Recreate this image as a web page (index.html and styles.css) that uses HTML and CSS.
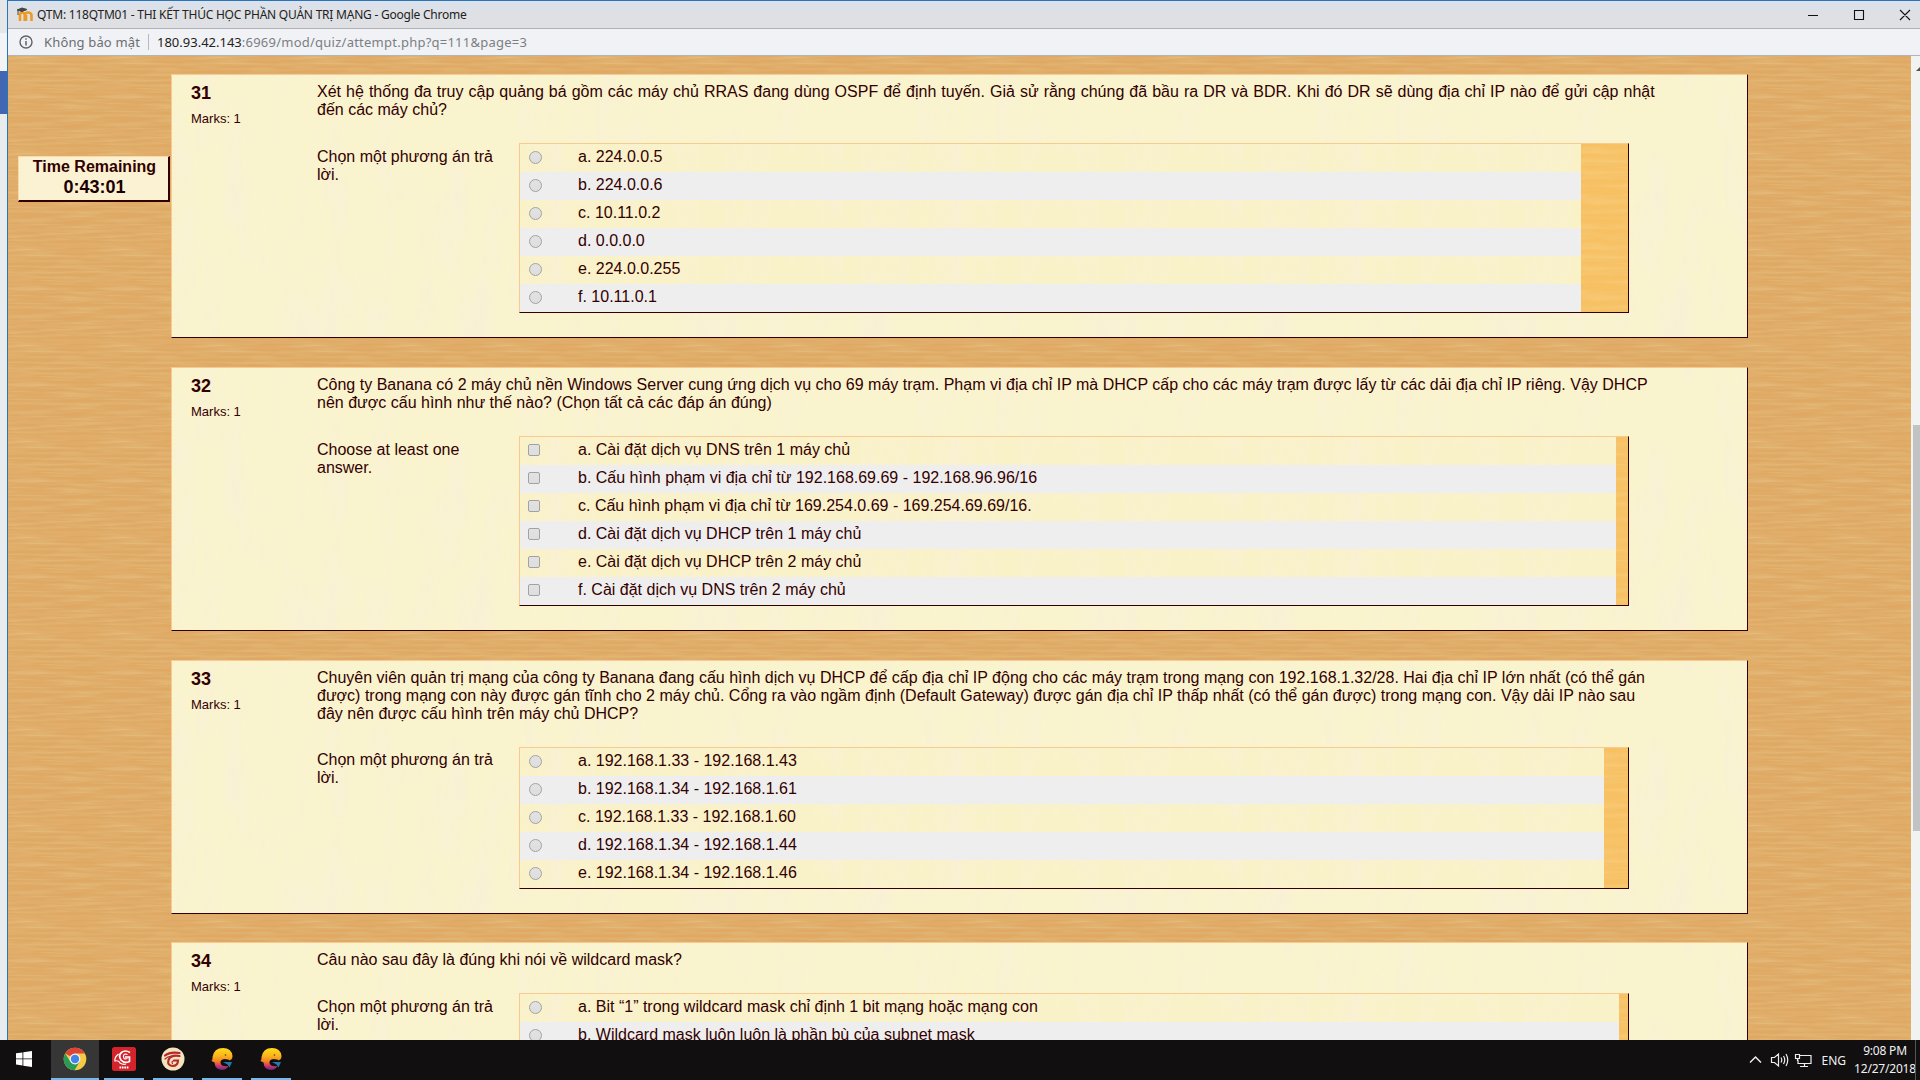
FILE: index.html
```html
<!DOCTYPE html>
<html lang="vi">
<head>
<meta charset="utf-8">
<title>QTM: 118QTM01 - THI KẾT THÚC HỌC PHẦN QUẢN TRỊ MẠNG</title>
<link rel="stylesheet" href="styles.css">
</head>
<body>
<div class="desktop">
  <div class="behind"><i></i></div>
  <div class="window">
    <header class="titlebar">
      <svg class="favicon" width="17" height="15" viewBox="0 0 17 15"><path d="M3 14V8q0-2.500 2.300-2.500T7.700 8v6M8 8q0-2.500 3-2.500T14.500 8v6M9 14V8" fill="none" stroke="#eb9a25" stroke-width="2.600"/><path d="M0 3l5-2 5 1.500-5 2zM1 4v4" fill="#444" stroke="#444"/></svg>
      <span class="title">QTM: 118QTM01 - THI KẾT THÚC HỌC PHẦN QUẢN TRỊ MẠNG - Google Chrome</span>
      <svg class="controls" width="110" height="14" viewBox="0 0 110 14"><path d="M3 7.500h10M49.500 2.500h9v9h-9zM95 2l10 10M105 2l-10 10" fill="none" stroke="#111" stroke-width="1.100"/></svg>
    </header>
    <div class="addressbar">
      <svg width="14" height="14" viewBox="0 0 14 14"><circle cx="7" cy="7" r="6" fill="none" stroke="#5f6368" stroke-width="1.400"/><path d="M7 6v4.500M7 3.300v1.500" stroke="#5f6368" stroke-width="1.500"/></svg>
      <span class="insecure">Không bảo mật</span><span class="divider"></span><span class="url"><b>180.93.42.143</b>:6969/mod/quiz/attempt.php?q=111&amp;page=3</span>
    </div>
    <div class="viewport">
      <main class="page">
        <section class="card">
          <div class="info"><h2>31</h2><p>Marks: 1</p></div>
          <div class="content">
            <p class="question"><span class="justified">Xét hệ thống đa truy cập quảng bá gồm các máy chủ RRAS đang dùng OSPF để định tuyến. Giả sử rằng chúng đã bầu ra DR và BDR. Khi đó DR sẽ dùng địa chỉ IP nào để gửi cập nhật</span><br>đến các máy chủ?</p>
            <div class="ablock"><p class="prompt">Chọn một phương án trả lời.</p>
              <ul class="answers pad47">
                <li><i class="radio"></i>a. 224.0.0.5</li><li><i class="radio"></i>b. 224.0.0.6</li><li><i class="radio"></i>c. 10.11.0.2</li><li><i class="radio"></i>d. 0.0.0.0</li><li><i class="radio"></i>e. 224.0.0.255</li><li><i class="radio"></i>f. 10.11.0.1</li>
              </ul></div>
          </div>
        </section>
        <section class="card">
          <div class="info"><h2>32</h2><p>Marks: 1</p></div>
          <div class="content">
            <p class="question">Công ty Banana có 2 máy chủ nền Windows Server cung ứng dịch vụ cho 69 máy trạm. Phạm vi địa chỉ IP mà DHCP cấp cho các máy trạm được lấy từ các dải địa chỉ IP riêng. Vậy DHCP<br>nên được cấu hình như thế nào? (Chọn tất cả các đáp án đúng)</p>
            <div class="ablock"><p class="prompt">Choose at least one answer.</p>
              <ul class="answers pad12">
                <li><i class="check"></i>a. Cài đặt dịch vụ DNS trên 1 máy chủ</li><li><i class="check"></i>b. Cấu hình phạm vi địa chỉ từ 192.168.69.69 - 192.168.96.96/16</li><li><i class="check"></i>c. Cấu hình phạm vi địa chỉ từ 169.254.0.69 - 169.254.69.69/16.</li><li><i class="check"></i>d. Cài đặt dịch vụ DHCP trên 1 máy chủ</li><li><i class="check"></i>e. Cài đặt dịch vụ DHCP trên 2 máy chủ</li><li><i class="check"></i>f. Cài đặt dịch vụ DNS trên 2 máy chủ</li>
              </ul></div>
          </div>
        </section>
        <section class="card tight">
          <div class="info"><h2>33</h2><p>Marks: 1</p></div>
          <div class="content">
            <p class="question">Chuyên viên quản trị mạng của công ty Banana đang cấu hình dịch vụ DHCP để cấp địa chỉ IP động cho các máy trạm trong mạng con 192.168.1.32/28. Hai địa chỉ IP lớn nhất (có thể gán<br>được) trong mạng con này được gán tĩnh cho 2 máy chủ. Cổng ra vào ngầm định (Default Gateway) được gán địa chỉ IP thấp nhất (có thể gán được) trong mạng con. Vậy dải IP nào sau<br>đây nên được cấu hình trên máy chủ DHCP?</p>
            <div class="ablock"><p class="prompt">Chọn một phương án trả lời.</p>
              <ul class="answers pad24">
                <li><i class="radio"></i>a. 192.168.1.33 - 192.168.1.43</li><li><i class="radio"></i>b. 192.168.1.34 - 192.168.1.61</li><li><i class="radio"></i>c. 192.168.1.33 - 192.168.1.60</li><li><i class="radio"></i>d. 192.168.1.34 - 192.168.1.44</li><li><i class="radio"></i>e. 192.168.1.34 - 192.168.1.46</li>
              </ul></div>
          </div>
        </section>
        <section class="card">
          <div class="info"><h2>34</h2><p>Marks: 1</p></div>
          <div class="content">
            <p class="question">Câu nào sau đây là đúng khi nói về wildcard mask?</p>
            <div class="ablock"><p class="prompt">Chọn một phương án trả lời.</p>
              <ul class="answers pad9">
                <li><i class="radio"></i>a. Bit “1” trong wildcard mask chỉ định 1 bit mạng hoặc mạng con</li><li><i class="radio"></i>b. Wildcard mask luôn luôn là phần bù của subnet mask</li>
              </ul></div>
          </div>
        </section>
      </main>
      <aside class="timer"><strong>Time Remaining</strong><b>0:43:01</b></aside>
      <div class="scrollbar"><svg width="8" height="8" viewBox="0 0 8 8"><path d="M1 7l6-6 1 1v5z" fill="#505050"/></svg><i></i></div>
    </div>
  </div>
  <footer class="taskbar">
    <div class="task start"><svg width="16" height="16" viewBox="0 0 16 16"><path d="M0 2.300l6.500-.9v6.100H0zM7.300 1.300L16 0v7.500H7.300zM0 8.300h6.500v6.100L0 13.500zM7.300 8.300H16V16l-8.700-1.300z" fill="#fff"/></svg></div>
    <div class="task active"><svg width="24" height="24" viewBox="0 0 24 24"><circle cx="12" cy="12" r="11.300" fill="#f7c945"/><path d="M12 12L2.200 6.400A11.300 11.300 0 0 1 21.800 6.400H12z" fill="#dc4437"/><path d="M2.200 6.400A11.300 11.300 0 0 0 11.600 23.300L16.700 14.500 12 12 7.200 14.500z" fill="#2a9a57"/><circle cx="12" cy="12" r="5.400" fill="#f4f4f4"/><circle cx="12" cy="12" r="4.200" fill="#4384e8"/></svg></div>
    <div class="task"><svg width="24" height="24" viewBox="0 0 24 24"><rect width="24" height="24" rx="2.500" fill="#d3232b"/><path d="M18 5.500Q13 2.500 9.500 5.500T9 13q3.500 4 8.500 1.500V10H13" fill="none" stroke="#fff" stroke-width="1.700"/><path d="M15.500 7.500q-4-1.500-4 2t4 2M6.500 7Q2 11 3 14q4-1 5 2 3 2 6 1" fill="none" stroke="#fff" stroke-width="1.200"/><path d="M7.500 20.500h9" stroke="#fff" stroke-width="2" stroke-dasharray="1.700 .7"/></svg></div>
    <div class="task"><svg width="24" height="24" viewBox="0 0 24 24"><circle cx="12" cy="12" r="11.500" fill="#f3e4bd"/><g fill="none" stroke="#b3292d" stroke-linecap="round"><path d="M4 8.500q5-4 14.500-2.500" stroke-width="2.200"/><path d="M18.500 9q-9-1.500-11 4-1.500 5.500 4 6 5.500 0 5.500-5.500h-4" stroke-width="2.200"/><path d="M4 12q3-3 7-2.500" stroke-width="1.200"/><path d="M13 13.500q-3 1-1.500 3" stroke-width="1.200"/></g></svg></div>
    <div class="task"><svg width="22" height="24" viewBox="0 0 22 24"><defs><linearGradient id="g1" x2="0" y2="1"><stop offset="0" stop-color="#ffdb1c"/><stop offset=".35" stop-color="#fbb51c"/><stop offset=".62" stop-color="#f08024"/><stop offset=".8" stop-color="#d3366e"/><stop offset="1" stop-color="#642c83"/></linearGradient></defs><path d="M1.500 10Q3 1 12 1q8.500 0 9.500 8 0 3.500-3 4.500-1-1.500-5-1.500-4.500.5-4 4 1 4 8 3-2 4-7 4-6.500-.5-7-7.500L.5 14q1.500-1.500 1-4z" fill="url(#g1)"/><path d="M12 15h9l-2.500 5.500-2-3z" fill="#207da9"/><circle cx="14.500" cy="8" r=".8" fill="#5b3510"/></svg></div>
    <div class="task"><svg width="22" height="24" viewBox="0 0 22 24"><path d="M1.500 10Q3 1 12 1q8.500 0 9.500 8 0 3.500-3 4.500-1-1.500-5-1.500-4.500.5-4 4 1 4 8 3-2 4-7 4-6.500-.5-7-7.500L.5 14q1.500-1.500 1-4z" fill="url(#g1)"/><path d="M12 15h9l-2.500 5.500-2-3z" fill="#207da9"/><circle cx="14.500" cy="8" r=".8" fill="#5b3510"/></svg></div>
    <div class="tray">
      <svg width="64" height="16" viewBox="0 0 64 16"><g fill="none" stroke="#eee" stroke-width="1.200"><path d="M1 10.500l5.500-5.500 5.500 5.500" stroke-width="1.500"/><path d="M22.500 5.500h3l4-3.500v12l-4-3.500h-3zM32 5.500q1.500 2.500 0 5M34.500 4q2.500 4 0 8M37 2q3.500 6 0 12"/><path d="M51 3.500h11v8H49v-4M55.500 11.500v3M51 14.500h8M46.500 2.500h4v4h-4zM48.500 6.500V9"/></g></svg>
      <span class="lang">ENG</span>
      <span class="clock">9:08 PM<br>12/27/2018</span><i class="peek"></i>
    </div>
  </footer>
</div>
</body>
</html>
```
FILE: styles.css
```css
:root {
  --parchment: url("data:image/svg+xml,%3Csvg xmlns='http://www.w3.org/2000/svg' width='400' height='300'%3E%3Cfilter id='f' x='0' y='0' width='1' height='1'%3E%3CfeTurbulence type='fractalNoise' baseFrequency='.04 .009' numOctaves='3' seed='8' stitchTiles='stitch'/%3E%3CfeColorMatrix values='0 0 0 0 .95 0 0 0 0 .87 0 0 0 0 .68 0 2 0 0 -.85'/%3E%3C/filter%3E%3Crect width='400' height='300' filter='url(%23f)'/%3E%3C/svg%3E");
}
* { box-sizing: border-box; }
body { margin: 0; overflow: hidden; font-family: "Liberation Sans", Arial, sans-serif; }
h2, p, ul { margin: 0; padding: 0; }
i { display: block; font-style: normal; }

.desktop {
  display: grid;
  grid-template: 1040px 40px / 7px minmax(0, 1fr);
  width: 1920px;
  height: 1080px;
  overflow: hidden;
}
.behind { padding-top: 71px; background: linear-gradient(#e4e6e8 33px, #f2f4f6 33px 71px, #e9ecee 71px); }
.behind i { height: 43px; background: #4267b2; }

.window {
  display: flex;
  flex-direction: column;
  min-height: 0;
  border: solid #2b74b5;
  border-width: 1px 0 0 1px;
}
.titlebar {
  display: flex;
  align-items: center;
  height: 28px;
  padding: 0 5px 0 9px;
  background: linear-gradient(#dae2ee, #dee0e4 12px);
  border-bottom: 1px solid #b0b2b8;
  font: 12px "Noto Sans", sans-serif;
  color: #222;
}
.title { margin-left: 3px; white-space: nowrap; letter-spacing: -.23px; }
.controls { margin-left: auto; }
.addressbar {
  display: flex;
  align-items: center;
  height: 27px;
  padding-left: 11px;
  background: #f1f2f5;
  border-bottom: 1px solid #b0b4bc;
  font: 13px "Noto Sans", sans-serif;
  color: #6a6e73;
}
.insecure { margin-left: 11px; letter-spacing: .15px; }
.divider { width: 1px; height: 16px; margin: 0 8px; background: #b5b8bc; }
.url { color: #7b7f84; letter-spacing: .24px; }
.url b { font-weight: 400; color: #222; letter-spacing: 0; }

.viewport {
  position: relative;
  display: flex;
  flex: 1;
  min-height: 0;
  overflow: hidden;
}
.page {
  flex: 1;
  min-width: 0;
  padding: 18px 163px 0;
  background: #dfa963 url("data:image/svg+xml,%3Csvg xmlns='http://www.w3.org/2000/svg' width='96' height='96'%3E%3Cfilter id='f' x='0' y='0' width='1' height='1'%3E%3CfeTurbulence type='fractalNoise' baseFrequency='.021 .36' numOctaves='3' seed='4' stitchTiles='stitch'/%3E%3CfeColorMatrix values='0 0 0 0 .78 0 0 0 0 .54 0 0 0 0 .24 0 1.2 0 0 -.42'/%3E%3C/filter%3E%3Crect width='96' height='96' filter='url(%23f)'/%3E%3C/svg%3E") 0 -4px;
}
.card {
  display: flex;
  width: 1577px;
  margin-bottom: 29px;
  padding: 8px 80px 24px 19px;
  border: 1px solid #fac990;
  border-right-color: #300;
  border-bottom-color: #300;
  background: #f9f4cd var(--parchment);
  color: #300;
  font-size: 16px;
  line-height: 18px;
}
.card.tight { margin-bottom: 28px; }
.info { width: 126px; flex: none; }
.info h2 { margin-top: 1px; font-size: 18px; line-height: 19px; }
.info p { margin-top: 7px; font-size: 13px; line-height: 18px; }
.content { flex: none; width: 1350px; }
.question { white-space: nowrap; word-spacing: .03px; }
.justified { word-spacing: .59px; }
.ablock { display: flex; margin-top: 24px; }
.prompt { width: 202px; padding: 5px 20px 0 0; }
.tight .prompt { padding-top: 4px; }
.answers {
  width: 1110px;
  list-style: none;
  border: 1px solid #fac990;
  border-right-color: #300;
  border-bottom-color: #300;
  background: #f7c063 url("data:image/svg+xml,%3Csvg xmlns='http://www.w3.org/2000/svg' width='96' height='96'%3E%3Cfilter id='f' x='0' y='0' width='1' height='1'%3E%3CfeTurbulence type='fractalNoise' baseFrequency='.02 .2' numOctaves='2' seed='5' stitchTiles='stitch'/%3E%3CfeColorMatrix values='0 0 0 0 .93 0 0 0 0 .68 0 0 0 0 .28 0 1 0 0 -.38'/%3E%3C/filter%3E%3Crect width='96' height='96' filter='url(%23f)'/%3E%3C/svg%3E");
}
.answers li {
  display: flex;
  height: 28px;
  padding: 4px 0 0 9px;
  white-space: nowrap;
  background: #f9f2c9 var(--parchment);
}
.answers li:nth-child(even) { background: #efeeee; }
.pad47 { padding-right: 47px; }
.pad12 { padding-right: 12px; }
.pad24 { padding-right: 24px; }
.pad9 { padding-right: 9px; }
.radio, .check {
  width: 12px;
  height: 12px;
  margin: 3px 38px 0 -1px;
  border: 1px solid #a2a2a2;
  background: linear-gradient(#e2e2e2, #dedede);
}
.radio { width: 13px; height: 13px; border-radius: 50%; margin: 3px 36px 0 0; }
.check { border-radius: 2px; }

.timer {
  position: absolute;
  left: 10px;
  top: 100px;
  display: flex;
  flex-direction: column;
  align-items: center;
  width: 152px;
  height: 46px;
  padding-left: 2px;
  border: 1px solid #fbd9a8;
  border-right: 2px solid #300;
  border-bottom: 2px solid #300;
  background: #faf2d3;
  color: #300;
  font-size: 16px;
  line-height: 19px;
}
.timer b { font-size: 18px; line-height: 23px; color: #1a0000; }

.scrollbar { width: 9px; padding: 8px 0 0 2px; background: #f1f2f2; }
.scrollbar svg { display: block; margin-left: 2px; }
.scrollbar i { margin-top: 353px; height: 406px; background: #c0c2c3; }

.taskbar {
  grid-column: 1 / 3;
  display: flex;
  background: #110f10;
  color: #f2f2f2;
}
.task {
  display: flex;
  align-items: center;
  justify-content: center;
  width: 40px;
  height: 40px;
  margin-right: 9px;
  border-bottom: 2px solid #76b9ed;
}
.task.start { width: 48px; margin-right: 3px; border-color: transparent; }
.task.active { width: 48px; margin-right: 5px; background: #373637; }
.tray { display: flex; align-items: center; margin-left: auto; font: 12px "Noto Sans", sans-serif; }
.lang { margin-left: 8px; }
.clock { width: 62px; margin-left: 8px; text-align: center; line-height: 18px; letter-spacing: -.2px; }
.peek { width: 1px; height: 40px; margin: 0 4px 0 -1px; background: #555; }
```
